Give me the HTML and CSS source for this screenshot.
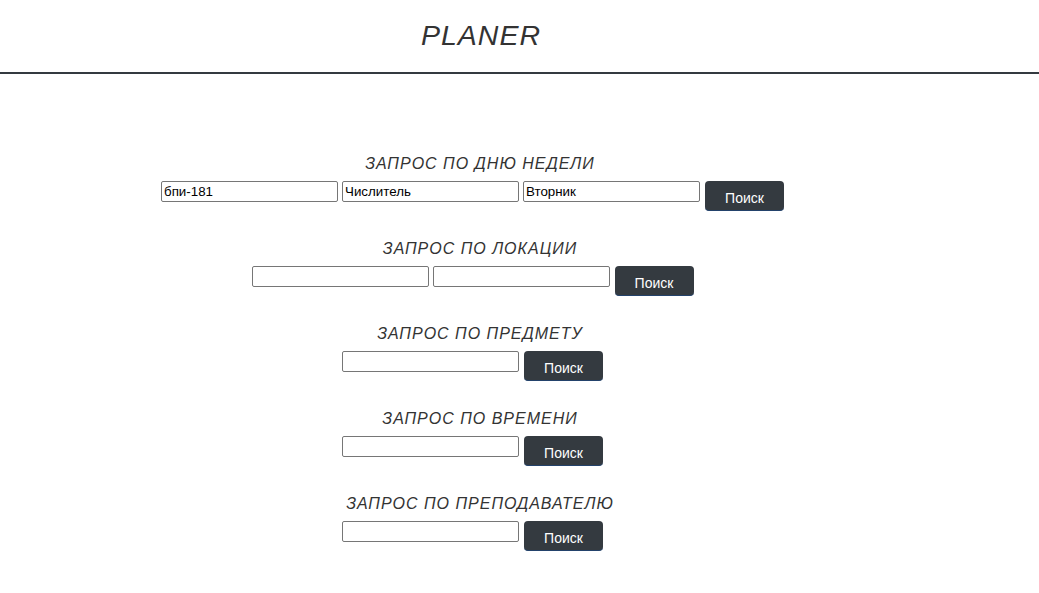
FILE: index.html
```html
<!DOCTYPE html>
<html lang="ru">
<head>
<meta charset="utf-8">
<title>Planer</title>
<link rel="stylesheet" href="styles.css">
</head>
<body>
<header class="header">
  <div class="wrap">
    <h1 class="logo">PLANER</h1>
  </div>
</header>
<main class="wrap main">
  <section class="query">
    <h2 class="query-title">ЗАПРОС ПО ДНЮ НЕДЕЛИ</h2>
    <form class="query-row">
      <input class="field" type="text" value="бпи-181">
      <input class="field" type="text" value="Числитель">
      <input class="field" type="text" value="Вторник">
      <button class="btn" type="button">Поиск</button>
    </form>
  </section>
  <section class="query">
    <h2 class="query-title">ЗАПРОС ПО ЛОКАЦИИ</h2>
    <form class="query-row">
      <input class="field" type="text">
      <input class="field" type="text">
      <button class="btn" type="button">Поиск</button>
    </form>
  </section>
  <section class="query">
    <h2 class="query-title">ЗАПРОС ПО ПРЕДМЕТУ</h2>
    <form class="query-row">
      <input class="field" type="text">
      <button class="btn" type="button">Поиск</button>
    </form>
  </section>
  <section class="query">
    <h2 class="query-title">ЗАПРОС ПО ВРЕМЕНИ</h2>
    <form class="query-row">
      <input class="field" type="text">
      <button class="btn" type="button">Поиск</button>
    </form>
  </section>
  <section class="query">
    <h2 class="query-title">ЗАПРОС ПО ПРЕПОДАВАТЕЛЮ</h2>
    <form class="query-row">
      <input class="field" type="text">
      <button class="btn" type="button">Поиск</button>
    </form>
  </section>
</main>
</body>
</html>
```
FILE: styles.css
```css
* { box-sizing: border-box; }
body {
  margin: 0;
  background: #fff;
  font-family: "Liberation Sans", Arial, sans-serif;
  color: #333;
}
.wrap {
  width: 960px;
}
.header {
  height: 74px;
  border-bottom: 2px solid #343a40;
}
.logo {
  margin: 0;
  padding-top: 19px;
  padding-left: 2px;
  text-align: center;
  font-size: 28.5px;
  line-height: 32px;
  font-weight: normal;
  font-style: italic;
  letter-spacing: 1px;
  color: #333;
}
.main {
  padding-top: 80px;
}
.query {
  margin-bottom: 28px;
}
.query-title {
  margin: 0 0 7px;
  text-align: center;
  font-size: 16px;
  line-height: 20px;
  font-weight: normal;
  font-style: italic;
  letter-spacing: 1px;
  color: #333;
}
.query-row {
  margin: 0;
  display: flex;
  justify-content: center;
  align-items: flex-start;
  gap: 4px;
  padding-right: 15px;
}
.field {
  width: 177px;
  height: 21px;
  margin: 0;
  padding: 1px 2px;
  border: 1px solid #767676;
  border-radius: 2px;
  font-family: "Liberation Sans", Arial, sans-serif;
  font-size: 13.33px;
  color: #000;
  background: #fff;
}
.btn {
  width: 79px;
  height: 30px;
  margin: 0 0 0 1px;
  padding: 4px 0 0;
  border: 0;
  border-bottom: 1px solid #23426b;
  border-radius: 4px;
  background: #343a40;
  color: #fff;
  font-family: "Liberation Sans", Arial, sans-serif;
  font-size: 14px;
}
```
